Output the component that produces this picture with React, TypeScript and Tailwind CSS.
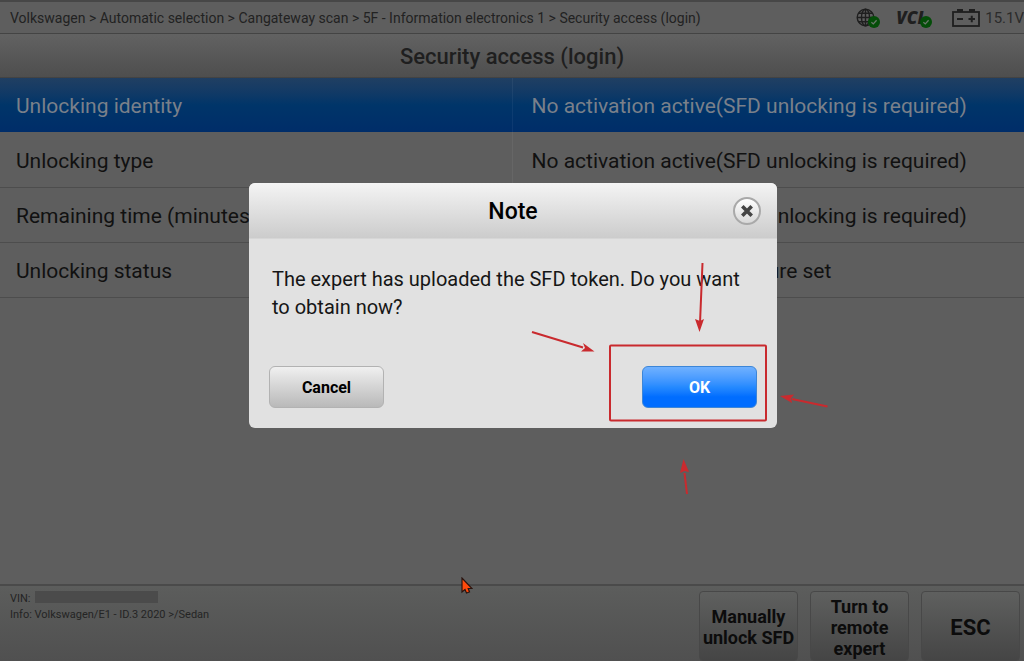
import React from 'react';

interface InfoRow {
  name: string;
  value: string;
}

const crumbs = [
  'Volkswagen',
  'Automatic selection',
  'Cangateway scan',
  '5F - Information electronics 1',
  'Security access (login)',
];

const rows: InfoRow[] = [
  { name: 'Unlocking identity', value: 'No activation active(SFD unlocking is required)' },
  { name: 'Unlocking type', value: 'No activation active(SFD unlocking is required)' },
  { name: 'Remaining time (minutes)', value: 'No activation active(SFD unlocking is required)' },
  { name: 'Unlocking status', value: 'No authentication procedure set' },
];

function CheckBadge() {
  return (
    <svg className="absolute -right-1 bottom-0 h-3 w-3" viewBox="0 0 12 12" aria-hidden="true">
      <circle cx="6" cy="6" r="6" fill="#044d08" />
      <path d="M3.4 6.2l1.9 1.7 3.3-3.6" fill="none" stroke="#6b776b" strokeWidth="1.3" />
    </svg>
  );
}

function StatusIcons() {
  return (
    <div className="flex shrink-0 items-center text-[#1f1f1f]">
      <div className="relative mr-5 h-5 w-5">
        <svg className="h-5 w-5" viewBox="0 0 20 20" fill="none" stroke="currentColor" strokeWidth="1.4" aria-hidden="true">
          <circle cx="9.5" cy="9.5" r="8.3" />
          <ellipse cx="9.5" cy="9.5" rx="4" ry="8.3" />
          <path d="M9.5 1.2v16.6M1.2 9.5h16.6M2.5 5.2h14M2.5 13.8h14" />
        </svg>
        <CheckBadge />
      </div>
      <div className="relative mr-6 h-5 w-8">
        <span className="block font-['Open_Sans'] text-[17px] font-extrabold italic leading-[19px]">VCI</span>
        <CheckBadge />
      </div>
      <svg className="mr-[5px] h-[18px] w-7" viewBox="0 0 28 18" aria-hidden="true">
        <path d="M5 0h6v3H5zM17 0h6v3h-6z" fill="currentColor" />
        <rect x="1" y="3" width="26" height="14" fill="none" stroke="currentColor" strokeWidth="1.8" />
        <path d="M5 10h6M16.5 10h6.5M19.75 6.8v6.4" stroke="currentColor" strokeWidth="2" />
      </svg>
      <span className="pt-0.5 text-[15px] text-[#2b2b2b]">15.1V</span>
    </div>
  );
}

function FooterButton({ children, large }: { children: React.ReactNode; large?: boolean }) {
  return (
    <button
      type="button"
      className={
        large
          ? 'h-[70px] w-[99px] rounded border border-[#484848] bg-linear-to-b from-[#5f605f] to-[#454545] pt-0.5 text-[22px] font-bold text-[#0c0c0c]'
          : 'h-[70px] w-[99px] rounded border border-[#484848] bg-linear-to-b from-[#5f605f] to-[#454545] pt-0.5 text-[18px] font-bold leading-[21px] text-[#0c0c0c]'
      }
    >
      {children}
    </button>
  );
}

// Red frame round the OK button and the arrows that point at it
function Annotations() {
  return (
    <svg
      className="pointer-events-none absolute left-0 top-0 h-[320px] w-[600px] overflow-visible"
      viewBox="0 0 600 320"
      fill="#c92a2e"
      stroke="#c92a2e"
      aria-hidden="true"
    >
      <rect x="361" y="162.5" width="156" height="75" rx="1" fill="none" strokeWidth="2" />
      <path d="M453.500 80L451 140M283 149L334 164.500M578.500 223.500L543 216M438 311L435.500 290" strokeWidth="2" />
      <g stroke="none">
        <path d="M450.500 149L446 136L451 138L455 136Z" />
        <path d="M345.500 168.500L332 168.500L336 165L334 160Z" />
        <path d="M531 213L545 211.500L542 215.500L543 220Z" />
        <path d="M434.500 276L440 289L435.500 288L431 290Z" />
      </g>
    </svg>
  );
}

function NoteDialog() {
  return (
    <div
      role="dialog"
      aria-labelledby="note-title"
      className="relative w-[528px] rounded-md bg-[#e1e1e1] text-[#161616]"
    >
      <div className="grid h-14 grid-cols-[28px_1fr_28px] items-center rounded-t-md border-b border-[#d6d6d6] bg-linear-to-b from-[#f4f4f4] to-[#cccccc] px-4">
        <h2 id="note-title" className="col-start-2 pt-1 text-center text-[23px] font-medium text-black">
          Note
        </h2>
        <button
          type="button"
          aria-label="Close"
          className="flex h-7 w-7 items-center justify-center rounded-full border-2 border-[#a9a9a9] bg-linear-to-b from-white to-[#d8d8d8]"
        >
          <svg className="h-3 w-3" viewBox="0 0 12 12" stroke="#444" strokeWidth="3.6" aria-hidden="true">
            <path d="M1.300 1.300l9.400 9.400M10.700 1.300l-9.400 9.400" />
          </svg>
        </button>
      </div>
      <p className="px-[23px] pt-[26px] text-[20px] leading-7">
        The expert has uploaded the SFD token. Do you want to obtain now?
      </p>
      <div className="flex justify-between px-5 pb-5 pt-[45px]">
        <button
          type="button"
          className="h-[42px] w-[115px] rounded-md border border-[#b2b2b2] bg-linear-to-b from-[#f0f0f0] to-[#b9b9b9] pt-0.5 text-[16px] font-bold text-black"
        >
          Cancel
        </button>
        <button
          type="button"
          className="h-[42px] w-[115px] rounded-md border border-[#3c86d8] bg-linear-to-b from-[#70b1ff] via-[#258aff] via-50% to-[#006dff] to-75% pt-0.5 text-[16px] font-bold text-white"
        >
          OK
        </button>
      </div>
      <Annotations />
    </div>
  );
}

export default function App() {
  return (
    <div className="relative flex min-h-screen flex-col overflow-hidden bg-[#5e5e5e] font-[Roboto,sans-serif]">
      <header className="flex h-[34px] items-center justify-between border-b border-t-2 border-b-[#444] border-t-[#474747] bg-[#5e5e5e] pl-2.5">
        <nav aria-label="Breadcrumb" className="whitespace-nowrap pt-0.5 text-[14px] text-[#222]">
          {crumbs.map((crumb, i) => (
            <React.Fragment key={crumb}>
              {i > 0 && ' > '}
              <a href="#">{crumb}</a>
            </React.Fragment>
          ))}
        </nav>
        <StatusIcons />
      </header>

      <h1 className="h-11 border-b border-[#434343] bg-linear-to-b from-[#626262] to-[#4e4e4e] text-center text-[22px] font-medium leading-[46px] text-[#1f1f1f]">
        Security access (login)
      </h1>

      <table className="w-full table-fixed border-collapse text-left text-[21px]">
        <tbody>
          {rows.map((row, i) => (
            <tr
              key={row.name}
              className={
                i === 0
                  ? 'h-[54px] bg-linear-to-b from-[#203f62] via-[#003569] to-[#002d69] text-[#7a808a]'
                  : 'h-[55px] border-b border-[#4d4d4d] text-[#111]'
              }
            >
              <th scope="row" className="border-r border-white/5 px-4 pb-0 pt-1 font-normal">
                {row.name}
              </th>
              <td className="px-[19px] pb-0 pt-1">{row.value}</td>
            </tr>
          ))}
        </tbody>
      </table>

      <footer className="mt-auto flex h-[77px] justify-between border-t-2 border-[#4a4a4a] bg-linear-to-b from-[#5c5d5c] to-[#505050] pl-2.5 pr-1 pt-[5px]">
        <div className="text-[11px] leading-4 text-[#242424]">
          <div className="flex items-center gap-1">
            VIN: <span className="mb-1 h-3 w-[123px] bg-[#4b4b4b]" />
          </div>
          <div>Info: Volkswagen/E1 - ID.3 2020 &gt;/Sedan</div>
        </div>
        <div className="flex gap-3">
          <FooterButton>Manually unlock SFD</FooterButton>
          <FooterButton>Turn to remote expert</FooterButton>
          <FooterButton large>ESC</FooterButton>
        </div>
      </footer>

      <div className="absolute inset-0 grid place-items-center pb-[50px] pl-0.5">
        <NoteDialog />
      </div>

      <svg className="pointer-events-none absolute left-[461px] top-[577px] h-[18px] w-3" viewBox="0 0 12 18" aria-hidden="true">
        <path d="M1 1v14l3-2.500 1.500 3.500 3-1-1.300-3.500H11z" fill="#ff4a0c" stroke="#2a1510" strokeWidth="1.200" />
      </svg>
    </div>
  );
}
